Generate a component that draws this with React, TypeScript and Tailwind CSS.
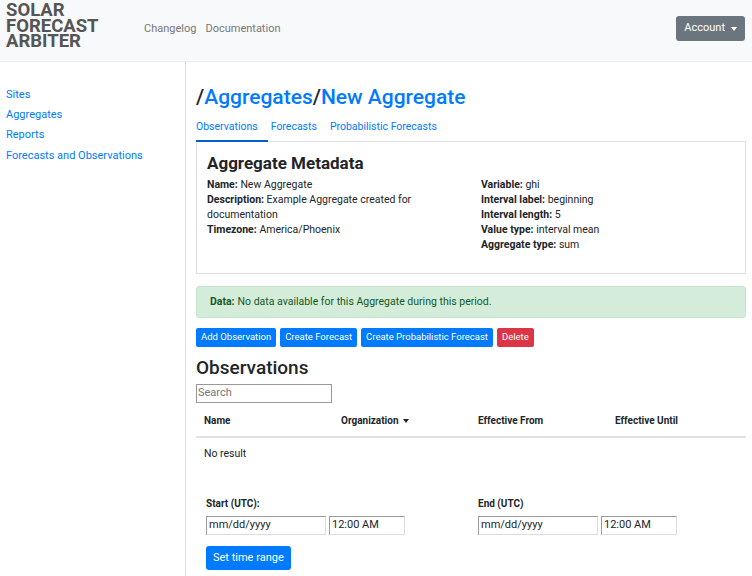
const sideLinks = ['Sites', 'Aggregates', 'Reports', 'Forecasts and Observations'];

const metaLeft: [string, string][] = [
  ['Name:', 'New Aggregate'],
  ['Description:', 'Example Aggregate created for documentation'],
  ['Timezone:', 'America/Phoenix'],
];

const metaRight: [string, string][] = [
  ['Variable:', 'ghi'],
  ['Interval label:', 'beginning'],
  ['Interval length:', '5'],
  ['Value type:', 'interval mean'],
  ['Aggregate type:', 'sum'],
];

function MetaRow({ label, value }: { label: string; value: string }) {
  return (
    <p>
      <b className="font-bold">{label}</b> {value}
    </p>
  );
}

function TimeField({ label, width }: { label: string; width: string }) {
  return (
    <div className={width}>
      <p className="mb-[5px] text-[10px] font-bold leading-[14px] text-[#212529]">{label}</p>
      <div className="flex gap-[3px]">
        <div className="flex h-[19px] w-[120px] items-center border border-[#999] border-r-[#ddd] border-b-[#ddd] pl-[2px] text-[11px] text-[#212529]">mm/dd/yyyy</div>
        <div className="flex h-[19px] w-[76px] items-center border border-[#999] border-r-[#ddd] border-b-[#ddd] pl-[2px] text-[11px] text-[#212529]">12:00 AM</div>
      </div>
    </div>
  );
}

export default function App() {
  return (
    <div className="min-h-[576px] bg-white font-['Roboto',sans-serif] text-[#212529]">
      <header className="flex h-[62px] border-b border-[#e9ecef] bg-[#f8f9fa] pl-[6px] pr-[7px]">
        <div className="w-[138px] pt-[3px] text-[18.5px] font-bold uppercase leading-[15.5px] text-[#555]">
          Solar
          <br />
          Forecast
          <br />
          Arbiter
        </div>
        <nav className="flex items-center gap-[9px] pb-[2px] text-[11px] text-[#777]">
          <a>Changelog</a>
          <a>Documentation</a>
        </nav>
        <button className="ml-auto mt-[16px] flex h-[25px] items-center gap-[6px] rounded-[3px] bg-[#6c757d] px-[8px] text-[11px] text-white">
          Account
          <span className="h-0 w-0 border-x-[3.5px] border-t-[4px] border-x-transparent border-t-white" />
        </button>
      </header>

      <div className="flex">
        <aside className="w-[185px] shrink-0 pl-[6px] pt-[26px]">
          <ul className="flex flex-col gap-[6px] text-[11px] leading-[14px] text-[#007bff]">
            {sideLinks.map((l, i) => (
              <li key={l} className={i === 3 ? 'pt-[1px]' : ''}>{l}</li>
            ))}
          </ul>
        </aside>

        <main className="min-h-[514px] flex-1 border-l border-[#dee2e6] pl-[10px] pr-[6px] pt-[22px]">
          <h1 className="text-[21px] font-medium leading-[26px] text-[#212529]">
            /<span className="text-[#007bff]">Aggregates</span>/<span className="text-[#007bff]">New Aggregate</span>
          </h1>

          <div className="mt-[9px] flex border-b border-[#dee2e6] text-[10.5px] text-[#007bff]">
            <span className="-mb-px border-b-2 border-[#0062cc] pb-[5px] pr-[10px]">Observations</span>
            <span className="pl-[3px] pr-[13px]">Forecasts</span>
            <span>Probabilistic Forecasts</span>
          </div>

          <section className="h-[132px] border border-t-0 border-[#dee2e6] px-[10px] pt-[10px]">
            <h2 className="text-[17px] font-bold leading-[22px]">Aggregate Metadata</h2>
            <div className="mt-[3px] flex text-[10.5px] leading-[15px]">
              <div className="w-[274px] pr-[40px]">
                {metaLeft.map(([k, v]) => (
                  <MetaRow key={k} label={k} value={v} />
                ))}
              </div>
              <div>
                {metaRight.map(([k, v]) => (
                  <MetaRow key={k} label={k} value={v} />
                ))}
              </div>
            </div>
          </section>

          <div className="mt-[12px] flex h-[32px] items-center rounded-[3px] border border-[#c3e6cb] bg-[#d4edda] px-[13px] text-[10.5px] text-[#155724]">
            <b className="mr-[3px]">Data:</b> No data available for this Aggregate during this period.
          </div>

          <div className="mt-[10px] flex gap-[4px] text-[9.5px]">
            <button className="h-[19px] rounded-[2px] bg-[#007bff] px-[5px] text-white">Add Observation</button>
            <button className="h-[19px] rounded-[2px] bg-[#007bff] px-[5px] text-white">Create Forecast</button>
            <button className="h-[19px] rounded-[2px] bg-[#007bff] px-[5px] text-white">Create Probabilistic Forecast</button>
            <button className="h-[19px] rounded-[2px] bg-[#dc3545] px-[5px] text-white">Delete</button>
          </div>

          <h2 className="mt-[9px] text-[19px] font-medium leading-[23px]">Observations</h2>
          <div className="mt-[5px] flex h-[19px] w-[136px] items-center border border-[#999] pl-[1px] text-[11px] text-[#777]">Search</div>

          <div className="mt-[3px] grid h-[32px] grid-cols-[137px_137px_137px_1fr] items-center border-b-2 border-[#dee2e6] pl-[8px] text-[10px] font-bold">
            <span>Name</span>
            <span className="flex items-center gap-[4px]">
              Organization
              <span className="h-0 w-0 border-x-[3.5px] border-t-[4px] border-x-transparent border-t-[#212529]" />
            </span>
            <span>Effective From</span>
            <span>Effective Until</span>
          </div>
          <p className="pl-[8px] pt-[9px] text-[10.5px] leading-[14px]">No result</p>

          <div className="mt-[36px] flex pl-[10px]">
            <TimeField label="Start (UTC):" width="w-[272px]" />
            <TimeField label="End (UTC)" width="w-[200px]" />
          </div>
          <button className="ml-[10px] mt-[11px] h-[24px] rounded-[3px] bg-[#007bff] px-[7px] text-[11px] text-white">Set time range</button>
        </main>
      </div>
    </div>
  );
}
